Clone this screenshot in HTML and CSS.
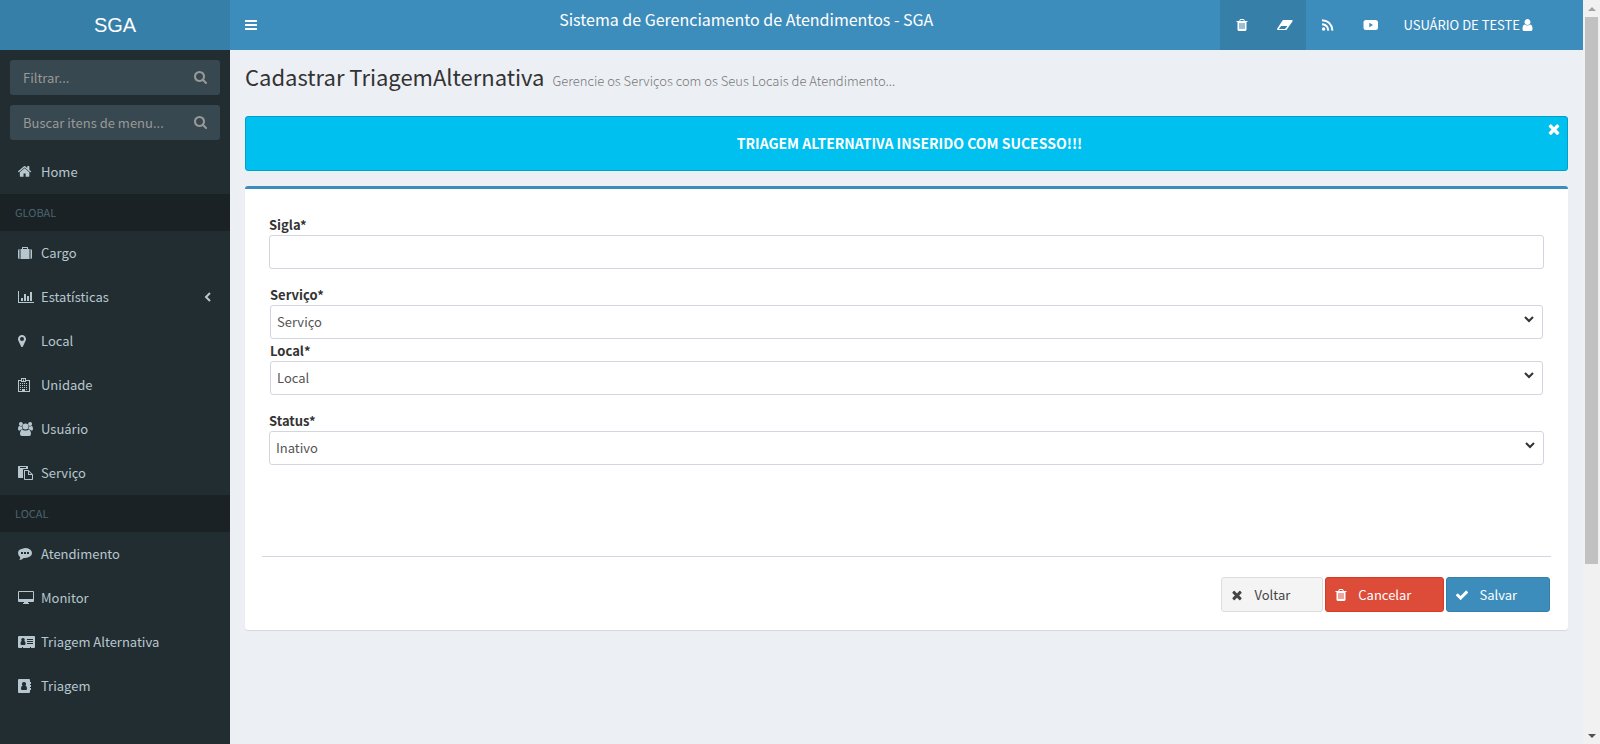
FILE: index.html
```html
<!DOCTYPE html>
<html lang="pt-BR">
<head>
<meta charset="utf-8">
<title>Sistema de Gerenciamento de Atendimentos - SGA</title>
<link rel="stylesheet" href="styles.css">
</head>
<body>
<svg class="sprite" aria-hidden="true">
  <symbol id="i-search" viewBox="64 128 1664 1664"><path d="M1216 832q0-185-131.500-316.500t-316.500-131.500-316.500 131.500-131.500 316.500 131.500 316.500 316.500 131.500 316.500-131.500 131.500-316.500zm512 832q0 52-38 90t-90 38q-54 0-90-38l-343-342q-179 124-399 124-143 0-273.500-55.500t-225-150-150-225-55.500-273.500 55.500-273.500 150-225 225-150 273.500-55.500 273.500 55.500 225 150 150 225 55.500 273.500q0 220-124 399l343 343q37 37 37 90z"/></symbol>
  <symbol id="i-trash" viewBox="0 0 1792 1792"><path d="M704 1376v-704q0-14-9-23t-23-9h-64q-14 0-23 9t-9 23v704q0 14 9 23t23 9h64q14 0 23-9t9-23zm256 0v-704q0-14-9-23t-23-9h-64q-14 0-23 9t-9 23v704q0 14 9 23t23 9h64q14 0 23-9t9-23zm256 0v-704q0-14-9-23t-23-9h-64q-14 0-23 9t-9 23v704q0 14 9 23t23 9h64q14 0 23-9t9-23zm-544-992h448l-48-117q-7-9-17-11h-317q-10 2-17 11zm928 32v64q0 14-9 23t-23 9h-96v948q0 83-47 143.500t-113 60.500h-832q-66 0-113-58.500t-47-141.500v-952h-96q-14 0-23-9t-9-23v-64q0-14 9-23t23-9h309l70-167q15-37 54-63t79-26h320q40 0 79 26t54 63l70 167h309q14 0 23 9t9 23z"/></symbol>
  <symbol id="i-times" viewBox="0 0 1792 1792"><path d="M1490 1322q0 40-28 68l-136 136q-28 28-68 28t-68-28l-294-294-294 294q-28 28-68 28t-68-28l-136-136q-28-28-28-68t28-68l294-294-294-294q-28-28-28-68t28-68l136-136q28-28 68-28t68 28l294 294 294-294q28-28 68-28t68 28l136 136q28 28 28 68t-28 68l-294 294 294 294q28 28 28 68z"/></symbol>
  <symbol id="i-check" viewBox="0 0 1792 1792"><path d="M1671 566q0 40-28 68l-724 724-136 136q-28 28-68 28t-68-28l-136-136-362-362q-28-28-28-68t28-68l136-136q28-28 68-28t68 28l294 295 656-657q28-28 68-28t68 28l136 136q28 28 28 68z"/></symbol>
  <symbol id="i-user" viewBox="256 0 1280 1792"><path d="M1536 1399q0 109-62.500 187t-150.500 78h-854q-88 0-150.500-78t-62.500-187q0-85 8.500-160.500t31.500-152 58.500-131 94-89 134.500-34.500q131 128 313 128t313-128q76 0 134.500 34.500t94 89 58.500 131 31.500 152 8.500 160.500zm-256-887q0 159-112.500 271.500t-271.500 112.500-271.500-112.500-112.500-271.500 112.500-271.500 271.500-112.500 271.500 112.500 112.500 271.500z"/></symbol>
  <symbol id="i-home" viewBox="96 120 2064 1700"><path d="M1472 992v480q0 26-19 45t-45 19h-384v-384h-256v384h-384q-26 0-45-19t-19-45v-480q0-1 .5-3t.5-3l575-474 575 474q1 2 1 6zm223-69l-62 74q-8 9-21 11h-3q-13 0-21-7l-692-577-692 577q-12 8-24 7-13-2-21-11l-62-74q-8-10-7-23.500t11-21.500l719-599q32-26 76-26t76 26l244 204v-195q0-14 9-23t23-9h192q14 0 23 9t9 23v408l219 182q10 8 11 21.500t-7 23.500z"/></symbol>
  <symbol id="i-bars" viewBox="0 0 12 14"><path d="M0 2.500Q0 2 .5 2h11q.5 0 .5.500v1q0 .5-.5.500h-11Q0 4 0 3.500zM0 6.500Q0 6 .5 6h11q.5 0 .5.500v1q0 .5-.5.500h-11Q0 8 0 7.500zM0 10.500q0-.5.500-.5h11q.5 0 .5.500v1q0 .5-.5.500h-11q-.5 0-.5-.5z"/></symbol>
  <symbol id="i-eraser" viewBox="0 0 16 14"><path fill-rule="evenodd" d="M6.500 2h8.200q1 0 1 .9 0 .4-.3.700L9.800 11.500q-.4.500-1 .5H.9Q0 12 0 11.200q0-.4.300-.8L5.500 2.500Q5.900 2 6.500 2zM4.200 8l-2.500 3H8l2.400-3z"/></symbol>
  <symbol id="i-rss" viewBox="0 0 14 14"><circle cx="2.600" cy="11" r="1.700"/><path fill="none" stroke="currentColor" stroke-width="2" d="M1 6.300q5.800.2 6.300 6.300M1 2.200q9.700.5 10.400 10.400"/></symbol>
  <symbol id="i-youtube" viewBox="0 0 16 14"><path fill-rule="evenodd" d="M3 2h9.500Q15 2 15 4.500v5Q15 12 12.500 12H3Q.5 12 .5 9.500v-5Q.5 2 3 2zm3.300 2.800v4.400L10 7z"/></symbol>
  <symbol id="i-cargo" viewBox="0 0 17 14"><path fill-rule="evenodd" d="M1.500 3v10Q0 13 0 11.500v-7Q0 3 1.500 3zM2.500 3H4V1.500Q4 1 4.500 1h5q.5 0 .5.500V3h1.500v10h-9zM5 2v1h4V2zM12.500 3Q14 3 14 4.500v7q0 1.500-1.500 1.500z"/></symbol>
  <symbol id="i-chart" viewBox="0 0 17 14"><path d="M0 1h1v11h15v1H0zM3 8h2v3H3zM6 4h2v7H6zM9 6h2v5H9zM12 2h2v9h-2z"/></symbol>
  <symbol id="i-pin" viewBox="0 0 17 14"><path fill-rule="evenodd" d="M4 1q1.700 0 2.850 1.150T8 5q0 1-.3 1.600L4.900 12.500Q4.600 13 4 13t-.9-.5L.3 6.600Q0 6 0 5q0-1.700 1.150-2.850T4 1zm0 2a2 2 0 1 0 0 4 2 2 0 0 0 0-4z"/></symbol>
  <symbol id="i-hospital" viewBox="0 0 17 14"><path fill-rule="evenodd" d="M0 2h3V0h5v2h4v12H0zm1 1v10h3v-2h3v2h4V3H8v1H3V3zM4 1v2h1V2h1v1h1V1H6v.5H5V1z"/><path d="M2 5h1v1H2zm2 0h1v1H4zm2 0h1v1H6zm2 0h1v1H8zM2 7h1v1H2zm2 0h1v1H4zm2 0h1v1H6zm2 0h1v1H8zM2 9h1v1H2zm2 0h1v1H4zm2 0h1v1H6zm2 0h1v1H8zM2 11h1v1H2zm6 0h1v1H8z"/></symbol>
  <symbol id="i-users" viewBox="0 0 17 14"><circle cx="2.900" cy="2" r="2"/><circle cx="12.100" cy="2" r="2"/><circle cx="7.500" cy="4.500" r="3"/><path d="M4.200 7.500Q2.600 7.300 2 8.500H1.200Q0 8.500 0 7q0-3 1.200-3 1.600.8 2.900.3Q3.900 6 4.600 7zM10.800 7.500q1.600-.2 2.200 1h.8Q15 8.500 15 7q0-3-1.200-3-1.600.8-2.900.3.200 1.700-.5 2.700zM4.600 7.700q2.900 1.800 5.800 0Q13 7.900 13 12q0 2-2 2H4q-2 0-2-2 0-4.100 2.600-4.300z"/></symbol>
  <symbol id="i-paste" viewBox="0 0 17 14"><path fill-rule="evenodd" d="M.7 0h8.600q.7 0 .7.700V3H6Q5 3 5 4v8H.7Q0 12 0 11.300V.7Q0 0 .7 0zM2 1v1h6V1z"/><path fill-rule="evenodd" d="M6 4h4.500L15 8.500V13.300q0 .7-.7.700H6.700q-.7 0-.7-.7zM7 5v8h7V9H10V5zm4 .8V8h2.200z"/></symbol>
  <symbol id="i-comment" viewBox="0 0 17 14"><path fill-rule="evenodd" d="M7 1q3 0 5 1.400T14 6t-2 3.600T7 11h-1.300Q4 12.800 1.300 13q.9-1.200 1-2.600Q0 8.800 0 6t2-3.600T7 1zM3 5v2h2V5zm3 0v2h2V5zm3 0v2h2V5z"/></symbol>
  <symbol id="i-monitor" viewBox="0 0 17 14"><path fill-rule="evenodd" d="M1 0h14q1 0 1 1v9q0 1-1 1h-5v1h1v1H5v-1h1v-1H1q-1 0-1-1V1q0-1 1-1zm0 1v7h14V1z"/></symbol>
  <symbol id="i-card" viewBox="0 0 17 14"><path fill-rule="evenodd" d="M1 1h15q1 0 1 1v10q0 1-1 1h-3v-1h-1v1H5v-1H4v1H1q-1 0-1-1V2q0-1 1-1zm8 3v1h6V4zm0 2v1h6V6zm0 2v1h6V8zM5 3a1.800 1.800 0 0 0-1.300 3Q2.500 6 2.500 8.500 2.500 10 3.500 10h3q1 0 1-1.500Q7.500 6 6.300 6A1.800 1.800 0 0 0 5 3z"/></symbol>
  <symbol id="i-book" viewBox="0 0 17 14"><path fill-rule="evenodd" d="M1 0h10q1 0 1 1v2h1v2h-1v1h1v2h-1v1h1v2h-1v2q0 1-1 1H1q-1 0-1-1V1q0-1 1-1zm5 3a2 2 0 0 0-1.400 3.500Q3 6.800 3 9.500 3 11 4 11h4q1 0 1-1.500 0-2.700-1.600-3A2 2 0 0 0 6 3z"/></symbol>
  <symbol id="i-left" viewBox="0 0 8 14"><path fill="none" stroke="currentColor" stroke-width="2" d="M6 3L2 7l4 4"/></symbol>
  <symbol id="i-down" viewBox="0 0 10 7"><path fill="none" stroke="currentColor" stroke-width="2" d="M1 1l4 4 4-4"/></symbol>
</svg>

<div class="page">
  <header class="topbar">
    <a class="logo" href="#">SGA</a>
    <button class="nav-button" type="button" aria-label="Alternar menu"><svg class="icon-bars"><use href="#i-bars"/></svg></button>
    <div class="system-name">Sistema de Gerenciamento de Atendimentos - SGA</div>
    <nav class="shortcuts">
      <a class="shortcut active" href="#" aria-label="Lixeira"><svg class="icon"><use href="#i-trash"/></svg></a>
      <a class="shortcut active" href="#" aria-label="Limpar"><svg class="icon-wide"><use href="#i-eraser"/></svg></a>
      <a class="shortcut" href="#" aria-label="RSS"><svg class="icon"><use href="#i-rss"/></svg></a>
      <a class="shortcut" href="#" aria-label="Vídeos"><svg class="icon-wide"><use href="#i-youtube"/></svg></a>
      <a class="account" href="#">USUÁRIO DE TESTE<svg class="icon-user"><use href="#i-user"/></svg></a>
    </nav>
  </header>

  <aside class="sidebar">
    <form class="search">
      <input class="search-input" type="text" placeholder="Filtrar..." aria-label="Filtrar">
      <button class="search-button" type="button" aria-label="Filtrar"><svg class="icon-search"><use href="#i-search"/></svg></button>
    </form>
    <form class="search">
      <input class="search-input" type="text" placeholder="Buscar itens de menu..." aria-label="Buscar itens de menu">
      <button class="search-button" type="button" aria-label="Buscar"><svg class="icon-search"><use href="#i-search"/></svg></button>
    </form>
    <nav class="menu">
      <a class="menu-item" href="#"><svg class="menu-icon"><use href="#i-home"/></svg>Home</a>
      <div class="menu-header">GLOBAL</div>
      <a class="menu-item" href="#"><svg class="menu-icon"><use href="#i-cargo"/></svg>Cargo</a>
      <a class="menu-item" href="#"><svg class="menu-icon"><use href="#i-chart"/></svg>Estatísticas<svg class="menu-arrow"><use href="#i-left"/></svg></a>
      <a class="menu-item" href="#"><svg class="menu-icon"><use href="#i-pin"/></svg>Local</a>
      <a class="menu-item" href="#"><svg class="menu-icon"><use href="#i-hospital"/></svg>Unidade</a>
      <a class="menu-item" href="#"><svg class="menu-icon"><use href="#i-users"/></svg>Usuário</a>
      <a class="menu-item" href="#"><svg class="menu-icon"><use href="#i-paste"/></svg>Serviço</a>
      <div class="menu-header">LOCAL</div>
      <a class="menu-item" href="#"><svg class="menu-icon"><use href="#i-comment"/></svg>Atendimento</a>
      <a class="menu-item" href="#"><svg class="menu-icon"><use href="#i-monitor"/></svg>Monitor</a>
      <a class="menu-item" href="#"><svg class="menu-icon"><use href="#i-card"/></svg>Triagem Alternativa</a>
      <a class="menu-item" href="#"><svg class="menu-icon"><use href="#i-book"/></svg>Triagem</a>
    </nav>
  </aside>

  <main class="content">
    <div class="heading">
      <h1 class="title">Cadastrar TriagemAlternativa</h1>
      <p class="subtitle">Gerencie os Serviços com os Seus Locais de Atendimento...</p>
    </div>
    <div class="alert" role="alert">
      <p class="alert-text">TRIAGEM ALTERNATIVA INSERIDO COM SUCESSO!!!</p>
      <button class="alert-close" type="button" aria-label="Fechar"><svg class="icon-close"><use href="#i-times"/></svg></button>
    </div>
    <form class="box">
      <div class="field">
        <label class="label" for="sigla">Sigla*</label>
        <input class="control" id="sigla" type="text">
      </div>
      <div class="field-group">
        <div class="field">
          <label class="label" for="servico">Serviço*</label>
          <div class="select-wrap"><select class="control" id="servico"><option>Serviço</option></select><svg class="caret"><use href="#i-down"/></svg></div>
        </div>
        <div class="field">
          <label class="label" for="local">Local*</label>
          <div class="select-wrap"><select class="control" id="local"><option>Local</option></select><svg class="caret"><use href="#i-down"/></svg></div>
        </div>
      </div>
      <div class="field">
        <label class="label" for="status">Status*</label>
        <div class="select-wrap"><select class="control" id="status"><option>Inativo</option></select><svg class="caret"><use href="#i-down"/></svg></div>
      </div>
      <div class="actions">
        <button class="button" type="button"><svg class="icon-button"><use href="#i-times"/></svg>Voltar</button>
        <button class="button danger" type="button"><svg class="icon-button"><use href="#i-trash"/></svg>Cancelar</button>
        <button class="button primary" type="button"><svg class="icon-button"><use href="#i-check"/></svg>Salvar</button>
      </div>
    </form>
  </main>

  <div class="scrollbar" aria-hidden="true">
    <div class="scroll-arrow up"></div>
    <div class="scroll-track"><div class="scroll-thumb"></div></div>
    <div class="scroll-arrow down"></div>
  </div>
</div>
</body>
</html>
```
FILE: styles.css
```css
* { box-sizing: border-box; }

body {
  margin: 0;
  background: #ecf0f5;
  color: #333;
  font-family: "Noto Sans CJK SC", "Noto Sans", sans-serif;
  font-size: 13px;
  line-height: 20px;
}

a { color: inherit; text-decoration: none; }
h1, p { margin: 0; }
button, input, select { font: inherit; }
svg { display: block; flex: none; fill: currentColor; }
.sprite { position: absolute; width: 0; height: 0; }

.page {
  display: grid;
  grid-template-columns: 230px minmax(0, 1fr) 17px;
  grid-template-rows: 50px 1fr;
  min-height: 100vh;
}

/* Top bar */
.topbar {
  grid-column: 1 / 3;
  display: flex;
  background: #3c8dbc;
  color: #fff;
}
.logo {
  width: 230px;
  background: #367fa9;
  font-family: "Liberation Sans", Arial, sans-serif;
  font-size: 20px;
  line-height: 50px;
  text-align: center;
}
.nav-button {
  padding: 0 15px;
  border: 0;
  background: none;
  color: inherit;
}
.system-name {
  flex: 1;
  padding-top: 9px;
  font-size: 16px;
  text-align: center;
}
.shortcuts { display: flex; padding-right: 35px; }
.shortcut {
  display: flex;
  align-items: center;
  justify-content: center;
  width: 43px;
}
.shortcut.active { background: #367fa9; }
.account {
  display: flex;
  align-items: center;
  gap: 2px;
  padding: 0 15px 0 11px;
}
.icon { width: 14px; height: 14px; }
.icon-wide { width: 16px; height: 14px; }
.icon-bars { width: 12px; height: 14px; }
.icon-user { width: 11px; height: 14px; }

/* Sidebar */
.sidebar {
  grid-column: 1;
  padding-top: 10px;
  background: #222d32;
  color: #b8c7ce;
}
.search {
  display: flex;
  height: 35px;
  margin: 0 10px 10px;
  border-radius: 3px;
  background: #374850;
  color: #999;
}
.search-input {
  flex: 1;
  min-width: 0;
  padding: 0 0 0 13px;
  border: 0;
  background: none;
  color: inherit;
}
.search-input::placeholder { color: #999; opacity: 1; }
.search-button {
  padding: 0 13px;
  border: 0;
  background: none;
  color: inherit;
}
.icon-search { width: 13px; height: 13px; }
.menu-item {
  display: flex;
  align-items: center;
  gap: 6px;
  height: 44px;
  padding: 0 18px;
}
.menu-icon { width: 17px; height: 14px; }
.menu-arrow { width: 8px; height: 14px; margin-left: auto; }
.menu-header {
  padding: 8px 15px 9px;
  background: #1a2226;
  color: #4b646f;
  font-size: 11px;
}

/* Content */
.content { grid-column: 2; padding: 13px 15px 15px; }
.heading {
  display: flex;
  align-items: baseline;
  gap: 8px;
  margin-bottom: 25px;
}
.title {
  font-size: 22px;
  font-weight: 400;
  line-height: 26px;
}
.subtitle { color: #777; font-size: 13px; font-weight: 300; }

.alert {
  position: relative;
  padding: 16px 15px 17px;
  margin-bottom: 15px;
  border: 1px solid #00a0c8;
  border-radius: 3px;
  background: #00c0ef;
  color: #fff;
}
.alert-text {
  padding-left: 6px;
  font-size: 14px;
  font-weight: 700;
  line-height: 20px;
  text-align: center;
}
.alert-close {
  position: absolute;
  top: 4px;
  right: 5px;
  padding: 0;
  border: 0;
  background: none;
  color: inherit;
}
.icon-close { width: 16px; height: 16px; }

.box {
  padding: 26px 17px 18px;
  border-top: 3px solid #3c8dbc;
  border-radius: 3px;
  background: #fff;
  box-shadow: 0 1px 1px rgba(0, 0, 0, 0.1);
}
.field { padding: 0 7px; }
.field-group {
  display: grid;
  gap: 2px;
  margin: 16px 1px;
}
.label {
  display: block;
  font-weight: 700;
}
.control {
  display: block;
  width: 100%;
  height: 34px;
  padding: 0 6px;
  border: 1px solid #d2d6de;
  border-radius: 3px;
  background: #fff;
  color: #555;
  appearance: none;
}
.select-wrap { position: relative; }
.caret {
  position: absolute;
  top: 11px;
  right: 9px;
  width: 10px;
  height: 7px;
  color: #333;
}

.actions {
  display: flex;
  justify-content: flex-end;
  gap: 2px;
  margin-top: 91px;
  padding: 20px 1px 0 0;
  border-top: 1px solid #d2d6de;
}
.button {
  display: flex;
  align-items: center;
  gap: 10px;
  height: 35px;
  padding: 0 32px 0 8px;
  border: 1px solid #ddd;
  border-radius: 3px;
  background: #f4f4f4;
  color: #444;
}
.button.danger { border-color: #d73925; background: #dd4b39; color: #fff; }
.button.primary { border-color: #367fa9; background: #3c8dbc; color: #fff; }
.icon-button { width: 14px; height: 14px; }

/* Scrollbar */
.scrollbar {
  grid-column: 3;
  grid-row: 1 / 3;
  display: flex;
  flex-direction: column;
  background: #f1f1f1;
}
.scroll-arrow {
  display: flex;
  align-items: center;
  justify-content: center;
  height: 17px;
}
.scroll-arrow::before {
  content: "";
  border: 4px solid transparent;
}
.scroll-arrow.up::before { border-top-width: 0; border-bottom-color: #a3a3a3; }
.scroll-arrow.down::before { border-bottom-width: 0; border-top-color: #505050; }
.scroll-track { flex: 1; padding: 0 2px; }
.scroll-thumb { height: 77%; background: #c1c1c1; }
```
